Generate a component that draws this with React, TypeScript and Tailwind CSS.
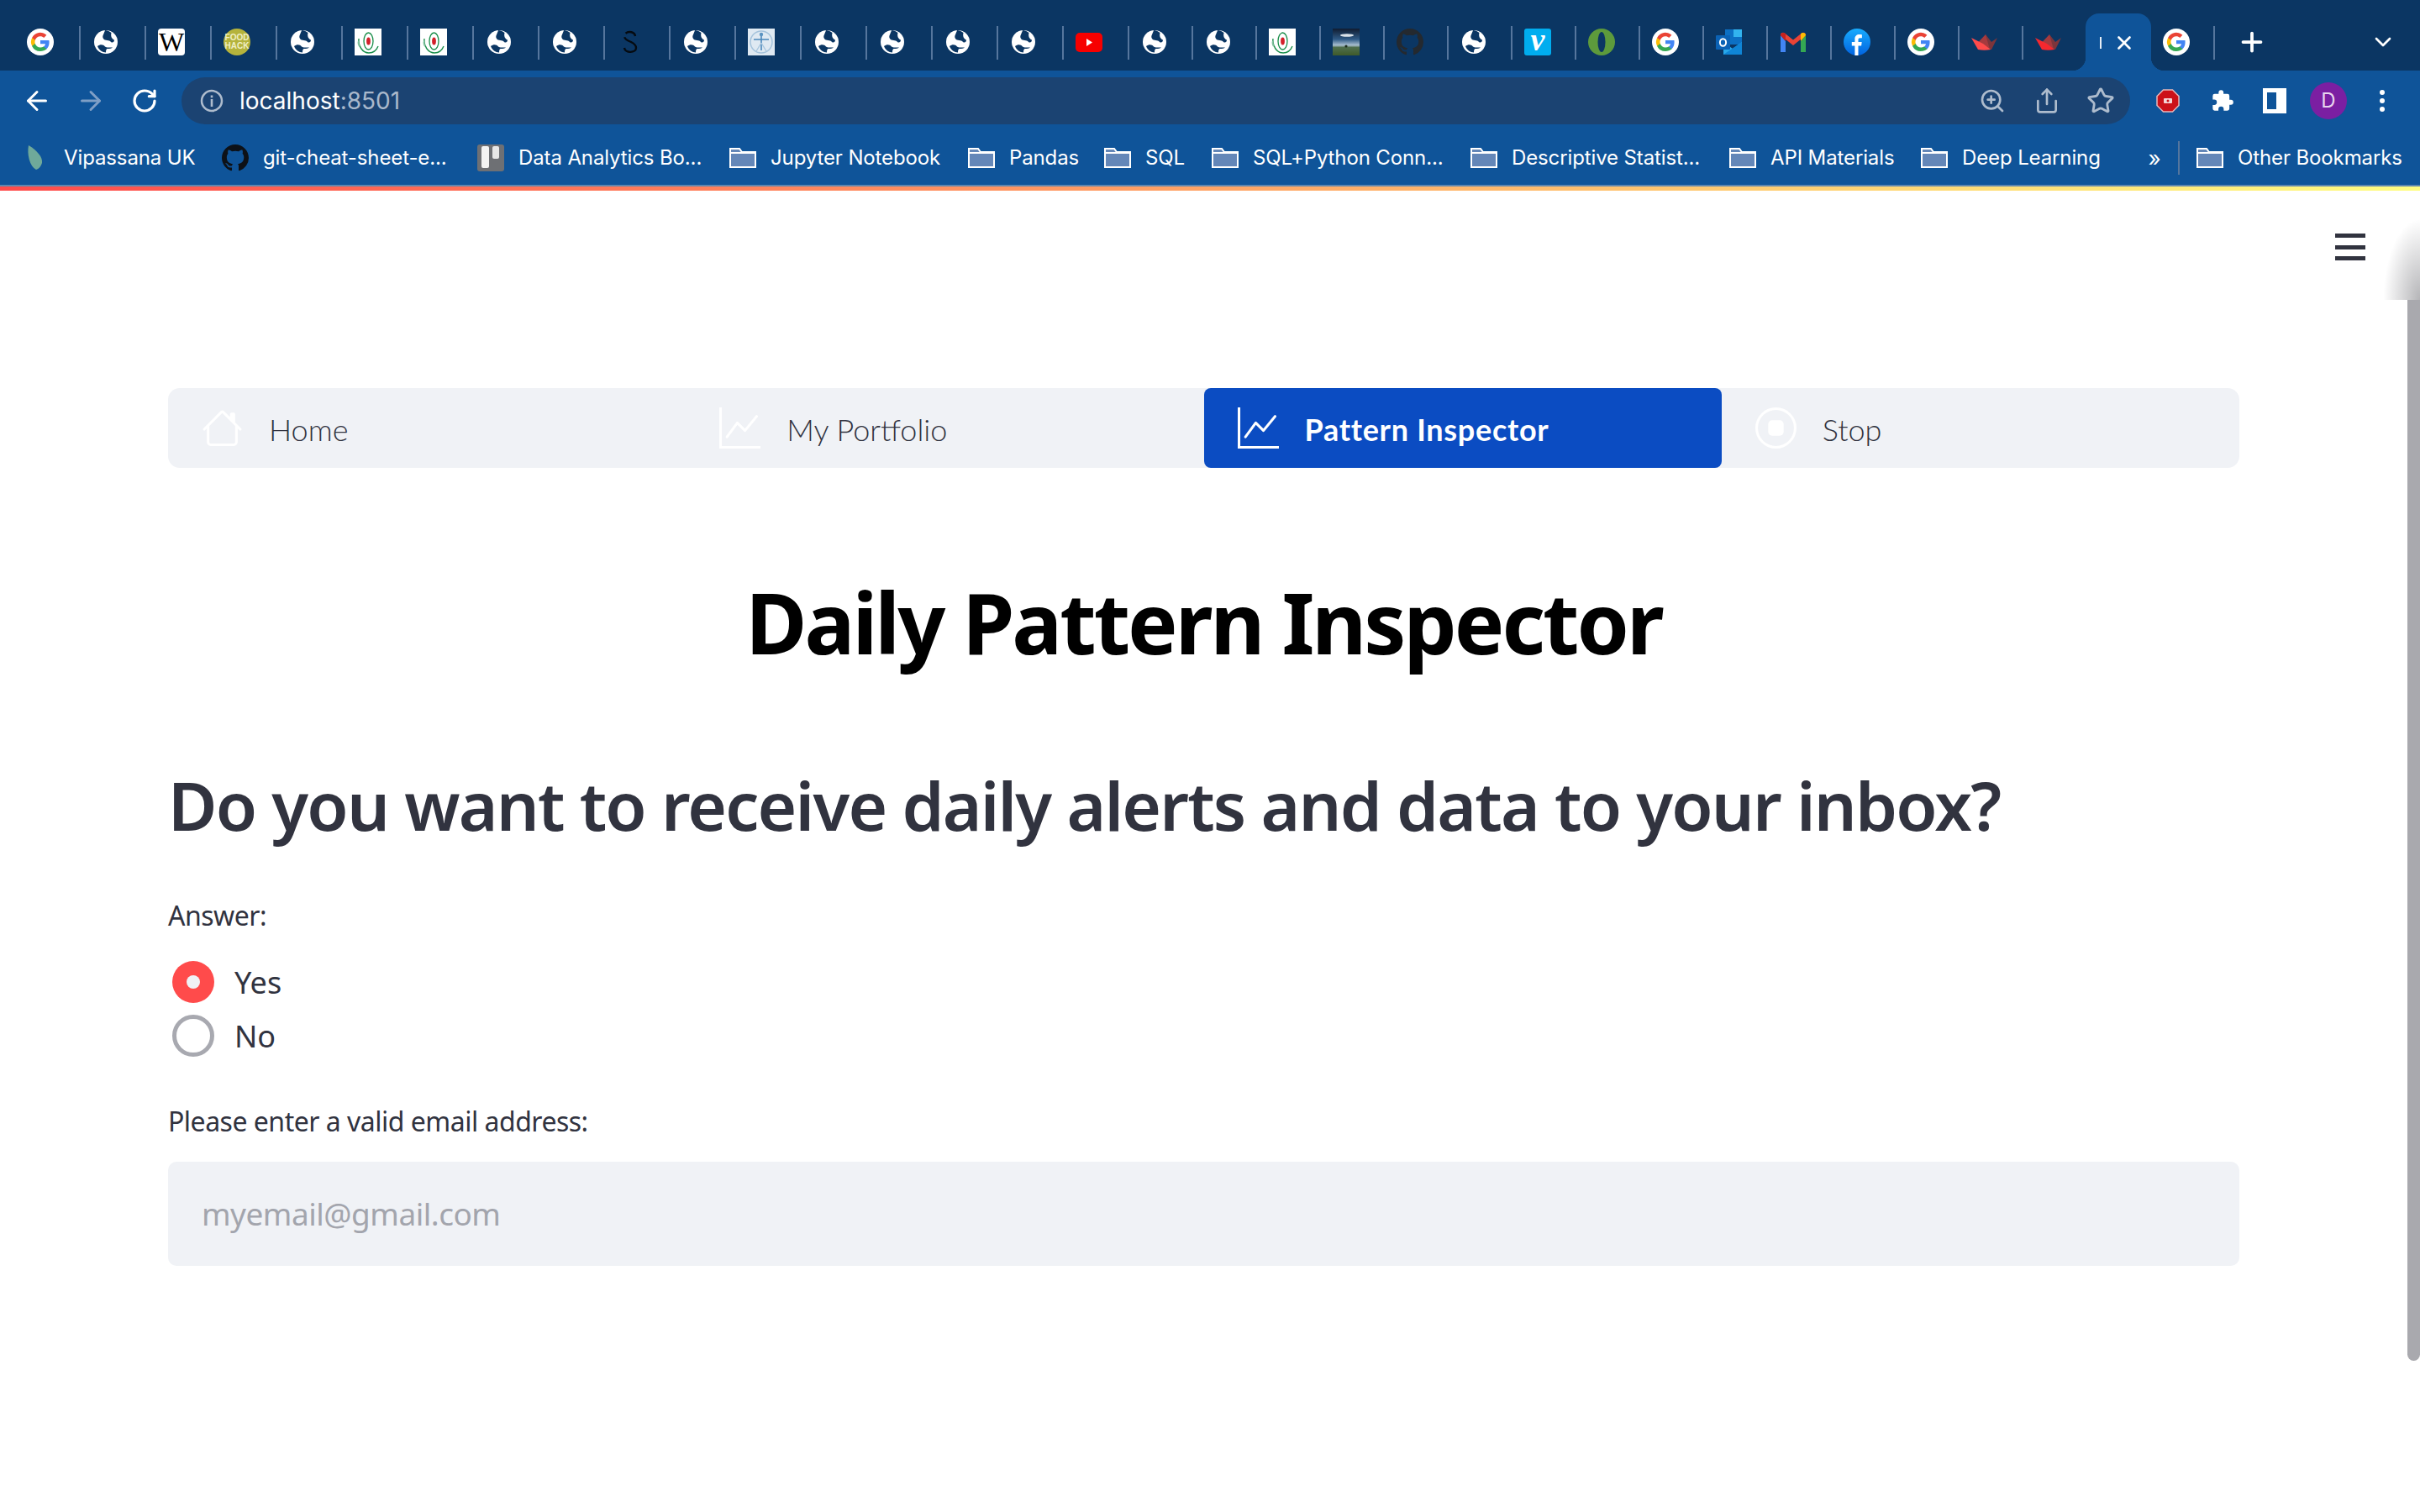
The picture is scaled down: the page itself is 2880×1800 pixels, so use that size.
import { BsGraphUp, BsHouse, BsStopCircle } from 'react-icons/bs'
import { ArrowLeft, ArrowRight, ChevronDown, Plus, RotateCw, Share, Star, X, ZoomIn } from 'lucide-react'
import type { ReactNode } from 'react'

const GoogleIcon = () => (
  <svg viewBox="0 0 32 32" className="h-8 w-8">
    <circle cx="16" cy="16" r="16" fill="#fff" />
    <path fill="#4285F4" d="M26.6 16.3c0-.8-.1-1.500-.2-2.200H16v4.200h6a5.100 5.100 0 0 1-2.200 3.400v2.800h3.600c2-1.900 3.200-4.700 3.200-8.200z" />
    <path fill="#34A853" d="M16 27c3 0 5.500-1 7.400-2.700l-3.600-2.800c-1 .7-2.300 1.100-3.800 1.100-2.900 0-5.300-2-6.200-4.600H6.100v2.900A11 11 0 0 0 16 27z" />
    <path fill="#FBBC05" d="M9.800 18a6.600 6.600 0 0 1 0-4.200v-2.900H6.100a11 11 0 0 0 0 9.900L9.800 18z" />
    <path fill="#EA4335" d="M16 9.300c1.600 0 3.100.6 4.200 1.700l3.200-3.200A11 11 0 0 0 6.100 10.900l3.700 2.900c.9-2.600 3.300-4.500 6.200-4.500z" />
  </svg>
)

const GlobeIcon = () => (
  <svg viewBox="0 0 32 32" className="h-8 w-8">
    <circle cx="16" cy="16" r="14" fill="#fff" />
    <path fill="#0b3663" d="M15 2c-1 4-4 7-2 10 2 3 7 1 9 4 2 1.500 4 0 4-2.500-3-1.500-4.500-4-3.500-8.500C20 3 17.500 2 15 2z" />
    <path fill="#0b3663" d="M6 21c3.500-2.500 7-2 9 .5 2.500 2 6 .5 9 1-1 1.500-4 1.500-6 1.500-1.500 0-2 2-2 4.500-4 0-8.500-3-10-7.500z" />
  </svg>
)

const SpiralIcon = () => (
  <svg viewBox="0 0 32 32" className="h-8 w-8">
    <rect width="32" height="32" fill="#fff" />
    <ellipse cx="16.500" cy="15" rx="5.500" ry="10" fill="none" stroke="#1c8f4c" strokeWidth="1.300" />
    <ellipse cx="16.500" cy="15" rx="2.400" ry="4.500" fill="#d3202a" />
    <path d="M5 12c-1 8 4 17 12 17 5 0 9-3 11-8" fill="none" stroke="#1c8f4c" strokeWidth="1.400" />
    <path d="M5 15c-1 2 0 5 1 6" fill="none" stroke="#7fbf9c" strokeWidth="2" />
  </svg>
)

const SIcon = () => (
  <svg viewBox="0 0 32 32" className="h-8 w-8">
    <path d="M22 9c-1-7-13-6-13 0 0 3 3 5 8 7 4 2 6 4 6 7 0 6-13 7-14 0" fill="none" stroke="#050a10" strokeWidth="2.400" strokeDasharray="14 5 40" />
  </svg>
)

const VitruvianIcon = () => (
  <svg viewBox="0 0 32 32" className="h-8 w-8">
    <rect width="32" height="32" fill="#dfe9f2" />
    <circle cx="16" cy="16" r="13" fill="none" stroke="#a5c3dc" strokeWidth="1.500" />
    <circle cx="16" cy="7" r="2.200" fill="#5b93c1" />
    <path d="M16 9v17M7 13h18" stroke="#4a87bb" strokeWidth="1.600" fill="none" />
    <path d="M16 17l-6 10M16 17l6 10" stroke="#a9c6de" strokeWidth="1.400" fill="none" />
  </svg>
)

const YoutubeIcon = () => (
  <svg viewBox="0 0 32 32" className="h-8 w-8">
    <rect x="0" y="5" width="32" height="23" rx="5" fill="#f70000" />
    <path d="M13 12l7 4.500-7 4.500z" fill="#fff" />
  </svg>
)

const LandscapeIcon = () => (
  <svg viewBox="0 0 32 32" className="h-8 w-8">
    <defs>
      <linearGradient id="sky" x1="0" y1="0" x2="0" y2="1">
        <stop offset="0" stopColor="#101c30" />
        <stop offset="0.4" stopColor="#2f5a86" />
        <stop offset="0.62" stopColor="#a9bfd0" />
        <stop offset="0.7" stopColor="#4f6f4d" />
        <stop offset="1" stopColor="#3f5a2a" />
      </linearGradient>
    </defs>
    <rect width="32" height="32" fill="url(#sky)" />
    <ellipse cx="17" cy="8" rx="8" ry="1.800" fill="#dbe3ea" />
    <circle cx="16" cy="21" r="1.600" fill="#1d2d1d" />
  </svg>
)

const GithubIcon = ({ fill }: { fill: string }) => (
  <svg viewBox="0 0 16 16" className="h-8 w-8" fill={fill}>
    <path d="M8 0C3.580 0 0 3.580 0 8c0 3.540 2.290 6.530 5.470 7.590.4.070.55-.17.55-.38 0-.19-.01-.82-.01-1.490-2.010.37-2.530-.49-2.690-.94-.09-.23-.48-.94-.82-1.130-.28-.15-.68-.52-.01-.53.63-.01 1.080.58 1.230.82.720 1.210 1.870.87 2.330.66.070-.52.280-.87.510-1.070-1.780-.2-3.640-.89-3.640-3.950 0-.87.310-1.590.820-2.150-.08-.2-.36-1.020.08-2.120 0 0 .67-.21 2.200.82.640-.18 1.320-.27 2-.27s1.360.09 2 .27c1.530-1.040 2.200-.82 2.200-.82.44 1.100.16 1.920.08 2.120.51.560.82 1.270.82 2.150 0 3.070-1.870 3.750-3.650 3.950.29.250.54.730.54 1.480 0 1.070-.01 1.930-.01 2.200 0 .21.150.46.550.38A8.010 8.010 0 0 0 16 8c0-4.420-3.580-8-8-8z" />
  </svg>
)

const VimeoIcon = () => (
  <div className="flex h-8 w-8 items-center justify-center rounded-[3px] bg-[#00adef] pb-[6px] font-['Liberation_Serif',serif] text-[38px] font-bold italic leading-none text-white">
    v
  </div>
)

const OperaGreenIcon = () => (
  <svg viewBox="0 0 32 32" className="h-8 w-8">
    <circle cx="16" cy="16" r="16" fill="#5d9a3c" />
    <ellipse cx="16" cy="16" rx="4.500" ry="12" fill="#0b3663" />
  </svg>
)

const OutlookIcon = () => (
  <svg viewBox="0 0 32 32" className="h-8 w-8">
    <rect x="11" y="1" width="20" height="18" fill="#0c70c4" />
    <rect x="21" y="1" width="10" height="9" fill="#32b4ef" />
    <path d="M9 16l11 8 11-8v15H9z" fill="#28a8ea" />
    <path d="M9 31l22-15v15z" fill="#0f85d6" />
    <rect x="0" y="8" width="17" height="17" rx="1" fill="#0b62b5" />
    <ellipse cx="8.500" cy="16.500" rx="3.600" ry="4.300" fill="none" stroke="#fff" strokeWidth="2" />
  </svg>
)

const GmailIcon = () => (
  <svg viewBox="0 0 32 32" className="h-8 w-8">
    <path d="M1 8v20h6V15z" fill="#4285f4" />
    <path d="M25 15v13h6V8z" fill="#34a853" />
    <path d="M1 8c0-3 3-4 5-2.500l10 8 10-8C28 4 31 5 31 8l-15 12z" fill="#ea4335" />
    <path d="M25 6.300c1.500-2 6-2 6 1.700l-6 7z" fill="#fbbc04" />
    <path d="M7 6.300C5.500 4.300 1 4.300 1 8l6 7z" fill="#c5221f" />
  </svg>
)

const FacebookIcon = () => (
  <svg viewBox="0 0 32 32" className="h-8 w-8">
    <defs>
      <linearGradient id="fb" x1="0" y1="0" x2="0" y2="1">
        <stop offset="0" stopColor="#18acfe" />
        <stop offset="1" stopColor="#0163e0" />
      </linearGradient>
    </defs>
    <circle cx="16" cy="16" r="16" fill="url(#fb)" />
    <path d="M13.400 32V20.500H9.800V16h3.600v-3.400c0-3.600 2.100-5.500 5.300-5.500 1.500 0 2.800.1 3.200.2v3.900h-2.200c-1.800 0-2.200.8-2.200 2.100V16h4.200l-.6 4.500h-3.600V32z" fill="#fff" />
  </svg>
)

const CrownIcon = ({ bright }: { bright?: boolean }) => (
  <svg viewBox="0 0 32 32" className="h-8 w-8">
    <path d="M17 7l7 9 7-5-7 14H14z" fill="#7d353b" />
    <path d="M8.500 16L17 7l5 18H10z" fill="#a63a3e" />
    <path d="M0 11l14 7 9 7c-5 1-10 1-15 0z" fill={bright ? '#f5282f' : '#ff4b4b'} />
  </svg>
)

const TabIconWiki = () => (
  <div className="flex h-8 w-8 items-center justify-center rounded-[4px] bg-white font-['Liberation_Serif',serif] text-[32px] leading-none text-black">
    W
  </div>
)

const TabIconFood = () => (
  <div className="flex h-8 w-8 flex-col items-center justify-center rounded-full bg-[#b5b33c] font-['Liberation_Sans',sans-serif] text-[10px] font-bold leading-[10px] text-[#f0efc6]">
    <span>FOOD</span>
    <span>HACK</span>
  </div>
)

const tabs: { icon: ReactNode; w: number }[] = [
  { icon: <GoogleIcon />, w: 78 },
  { icon: <GlobeIcon />, w: 78 },
  { icon: <TabIconWiki />, w: 78 },
  { icon: <TabIconFood />, w: 78 },
  { icon: <GlobeIcon />, w: 78 },
  { icon: <SpiralIcon />, w: 78 },
  { icon: <SpiralIcon />, w: 78 },
  { icon: <GlobeIcon />, w: 78 },
  { icon: <GlobeIcon />, w: 78 },
  { icon: <SIcon />, w: 78 },
  { icon: <GlobeIcon />, w: 78 },
  { icon: <VitruvianIcon />, w: 78 },
  { icon: <GlobeIcon />, w: 78 },
  { icon: <GlobeIcon />, w: 78 },
  { icon: <GlobeIcon />, w: 78 },
  { icon: <GlobeIcon />, w: 78 },
  { icon: <YoutubeIcon />, w: 78 },
  { icon: <GlobeIcon />, w: 76 },
  { icon: <GlobeIcon />, w: 76 },
  { icon: <SpiralIcon />, w: 76 },
  { icon: <LandscapeIcon />, w: 76 },
  { icon: <GithubIcon fill="#24292f" />, w: 76 },
  { icon: <GlobeIcon />, w: 76 },
  { icon: <VimeoIcon />, w: 76 },
  { icon: <OperaGreenIcon />, w: 76 },
  { icon: <GoogleIcon />, w: 76 },
  { icon: <OutlookIcon />, w: 76 },
  { icon: <GmailIcon />, w: 76 },
  { icon: <FacebookIcon />, w: 76 },
  { icon: <GoogleIcon />, w: 76 },
  { icon: <CrownIcon />, w: 76 },
]

const FolderIcon = () => (
  <svg viewBox="0 0 32 24" className="h-6 w-8">
    <path d="M1 23V1h11l3 4h16v18z" fill="#6487b8" stroke="#fff" strokeWidth="2" />
    <path d="M1 6h30" stroke="#fff" strokeWidth="2" />
  </svg>
)

const LeafIcon = () => (
  <svg viewBox="0 0 32 32" className="h-8 w-8">
    <path d="M7 1c10 6 17 14 16 21-1 4-4 7-7 8C8 26 5 11 7 1z" fill="#6fa99a" />
  </svg>
)

const BookIcon = () => (
  <svg viewBox="0 0 32 32" className="h-8 w-8">
    <rect width="32" height="32" rx="3" fill="#6e7074" />
    <rect x="5" y="2" width="9" height="26" rx="2" fill="#f3f3f3" />
    <rect x="18" y="2" width="8" height="15" rx="2" fill="#e7e7e7" />
  </svg>
)

const bookmarks: { icon: ReactNode; label: string; w: number }[] = [
  { icon: <LeafIcon />, label: 'Vipassana UK', w: 237 },
  { icon: <GithubIcon fill="#0d1117" />, label: 'git-cheat-sheet-e...', w: 304 },
  { icon: <BookIcon />, label: 'Data Analytics Bo...', w: 300 },
  { icon: <FolderIcon />, label: 'Jupyter Notebook', w: 284 },
  { icon: <FolderIcon />, label: 'Pandas', w: 162 },
  { icon: <FolderIcon />, label: 'SQL', w: 128 },
  { icon: <FolderIcon />, label: 'SQL+Python Conn...', w: 308 },
  { icon: <FolderIcon />, label: 'Descriptive Statist...', w: 308 },
  { icon: <FolderIcon />, label: 'API Materials', w: 228 },
  { icon: <FolderIcon />, label: 'Deep Learning', w: 264 },
]

const BookmarkItem = ({ icon, label, w }: { icon: ReactNode; label: string; w?: number }) => (
  <div className="flex shrink-0 items-center gap-[17px]" style={w ? { width: w } : undefined}>
    <div className="flex h-8 w-8 items-center justify-center">{icon}</div>
    <span className="whitespace-nowrap text-[24px] tracking-[-0.12px] text-white">{label}</span>
  </div>
)

const navItems = [
  { label: 'Home', icon: <BsHouse className="h-[49px] w-[49px]" /> },
  { label: 'My Portfolio', icon: <BsGraphUp className="h-[49px] w-[49px]" /> },
  { label: 'Pattern Inspector', icon: <BsGraphUp className="h-[49px] w-[49px]" />, active: true },
  { label: 'Stop', icon: <BsStopCircle className="h-[49px] w-[49px]" /> },
]

const BrowserChrome = () => (
  <div className="font-['Inter',sans-serif]">
    <div className="flex h-[84px] bg-[#0b3663] pl-[18px]">
      {tabs.map((tab, i) => (
        <div key={i} className="mt-[31px] flex h-[40px] shrink-0 items-start border-r-2 border-[#56769d] pl-[14px] pt-[3px]" style={{ width: tab.w }}>
          {tab.icon}
        </div>
      ))}
      <div className="mt-[34px] w-[74px] shrink-0 pl-[14px]">
        <CrownIcon bright />
      </div>
      <div className="relative mt-[16px] flex h-[68px] w-[78px] shrink-0 items-start rounded-t-[16px] bg-[#0f5499] pl-[17px] pt-[18px] text-white">
        <div className="absolute bottom-0 left-[-16px] h-4 w-4 bg-[radial-gradient(circle_at_0_0,transparent_16px,#0f5499_16.5px)]" />
        <div className="absolute bottom-0 right-[-16px] h-4 w-4 bg-[radial-gradient(circle_at_100%_0,transparent_16px,#0f5499_16.5px)]" />
        <span className="mt-[10px] h-[14px] w-[2px] bg-[#e6edf5]" />
        <X className="ml-[14px] mt-[4px] h-[26px] w-[26px]" strokeWidth={2.5} />
      </div>
      <div className="mt-[31px] flex h-[40px] w-[76px] shrink-0 items-start border-r-2 border-[#56769d] pl-[14px] pt-[3px]">
        <GoogleIcon />
      </div>
      <Plus className="ml-[26px] mt-[32px] h-9 w-9 text-white" strokeWidth={2.5} />
      <ChevronDown className="ml-[122px] mt-[34px] h-8 w-8 text-white" strokeWidth={2} />
    </div>
    <div className="h-[70px] bg-[#0f5499]">
      <div className="flex items-center pl-[12px] pt-[8px]">
        <div className="flex h-14 w-16 items-center justify-center">
          <ArrowLeft className="h-9 w-9 text-white" strokeWidth={2} />
        </div>
        <div className="flex h-14 w-16 items-center justify-center">
          <ArrowRight className="h-9 w-9 text-[#7f9fc6]" strokeWidth={2} />
        </div>
        <div className="flex h-14 w-16 items-center justify-center">
          <RotateCw className="h-8 w-8 text-white" strokeWidth={2.4} />
        </div>
        <div className="ml-[12px] flex h-14 w-[2319px] items-center rounded-full bg-[#1b4372] pl-[22px] pr-[18px]">
          <svg viewBox="0 0 28 28" className="h-7 w-7 text-[#aebccd]">
            <circle cx="14" cy="14" r="12" fill="none" stroke="currentColor" strokeWidth="2.500" />
            <rect x="12.700" y="12" width="2.600" height="9" fill="currentColor" />
            <rect x="12.700" y="7.500" width="2.600" height="2.800" fill="currentColor" />
          </svg>
          <span className="ml-[19px] text-[28px] text-white">
            localhost<span className="text-[#a9b8cb]">:8501</span>
          </span>
          <div className="flex-1" />
          <ZoomIn className="h-8 w-8 text-[#aebccd]" strokeWidth={2} />
          <Share className="ml-[33px] h-8 w-8 text-[#aebccd]" strokeWidth={2} />
          <Star className="ml-[31px] h-[34px] w-[34px] text-[#aebccd]" strokeWidth={2} />
        </div>
        <svg viewBox="0 0 28 28" className="ml-[31px] h-7 w-7">
          <path d="M8.500 1h11L27 8.500v11L19.500 27h-11L1 19.500v-11z" fill="#cc1119" stroke="#e8b9bb" strokeWidth="1.500" />
          <rect x="9" y="11" width="10" height="6" rx="1" fill="#f4d6d7" />
          <circle cx="14" cy="14" r="1.500" fill="#cc1119" />
        </svg>
        <svg viewBox="0 0 24 24" className="ml-[37px] h-7 w-7" fill="#fff">
          <path d="M20.500 11H19V7a2 2 0 0 0-2-2h-4V3.500a2.500 2.500 0 0 0-5 0V5H4a2 2 0 0 0-2 2v3.800h1.500a2.700 2.700 0 0 1 0 5.400H2V20a2 2 0 0 0 2 2h3.800v-1.500a2.700 2.700 0 0 1 5.400 0V22H17a2 2 0 0 0 2-2v-4h1.500a2.500 2.500 0 0 0 0-5z" />
        </svg>
        <div className="ml-[34px] flex h-[30px] w-[28px] border-[5px] border-r-[12px] border-white" />
        <div className="ml-[28px] flex h-11 w-11 items-center justify-center rounded-full bg-[#7b1fa2] text-[24px] text-[#e8d5ef]">D</div>
        <div className="ml-[39px] flex flex-col gap-[4px]">
          <span className="h-[6px] w-[6px] rounded-full bg-white" />
          <span className="h-[6px] w-[6px] rounded-full bg-white" />
          <span className="h-[6px] w-[6px] rounded-full bg-white" />
        </div>
      </div>
    </div>
    <div className="flex h-[66px] items-center bg-[#0f5499] pl-[27px] pt-[2px]">
      {bookmarks.map((b) => (
        <BookmarkItem key={b.label} {...b} />
      ))}
      <span className="w-[28px] text-center text-[26px] text-white">»</span>
      <span className="ml-[14px] h-[40px] w-[2px] bg-[#56769d]" />
      <div className="ml-[20px]">
        <BookmarkItem icon={<FolderIcon />} label="Other Bookmarks" />
      </div>
    </div>
    <div className="h-[2px] bg-[#5f86ae]" />
    <div className="h-[5px] bg-[linear-gradient(90deg,#ff4b4b,#fffd80)]" />
  </div>
)

const Radio = ({ label, checked }: { label: string; checked?: boolean }) => (
  <div className="flex h-[50px] items-center gap-[24px] pl-[5px]">
    {checked ? (
      <div className="flex h-[50px] w-[50px] items-center justify-center rounded-full bg-[#ff4b4b]">
        <div className="h-4 w-4 rounded-full bg-[#f0f2f6]" />
      </div>
    ) : (
      <div className="h-[50px] w-[50px] rounded-full border-[5px] border-[#a8a9b0]" />
    )}
    <span className="mt-[2px] text-[36px] text-[#31333f]">{label}</span>
  </div>
)

const App = () => {
  return (
    <div className="relative h-[1800px] w-[2880px] overflow-hidden bg-white font-['Noto_Sans',sans-serif]">
      <BrowserChrome />
      <div className="flex justify-end pr-[65px] pt-[51px]">
        <div className="flex w-[36px] flex-col gap-[8.500px]">
          <span className="h-[5px] bg-[#31333f]" />
          <span className="h-[5px] bg-[#31333f]" />
          <span className="h-[5px] bg-[#31333f]" />
        </div>
      </div>
      <div className="ml-[200px] w-[2465px]">
        <nav className="mt-[152px] grid h-[95px] grid-cols-4 rounded-[14px] bg-[#f0f2f6] font-['Lato',sans-serif] text-[36px] text-[#31333f]">
          {navItems.map((item) => (
            <div
              key={item.label}
              className={item.active ? 'flex items-center gap-[31px] rounded-[8px] bg-[#0b4cc2] pl-[40px] text-white' : 'flex items-center gap-[31px] pl-[40px]'}
            >
              <span className="text-white">{item.icon}</span>
              <span className={item.active ? 'mt-[3px] font-bold tracking-[0.7px]' : 'mt-[3px] font-light'}>{item.label}</span>
            </div>
          ))}
        </nav>
        <h1 className="mt-[103px] flex h-[160px] items-center justify-center text-[100px] font-bold tracking-[-3px] text-black">
          Daily Pattern Inspector
        </h1>
        <h2 className="mt-[58px] flex h-[160px] items-center text-[80px] font-semibold tracking-[-1.8px] text-[#31333f]">
          Do you want to receive daily alerts and data to your inbox?
        </h2>
        <div className="mt-[32px] flex h-[40px] items-center text-[32px] tracking-[-0.5px] text-[#31333f]">Answer:</div>
        <div className="mt-[34px]">
          <Radio label="Yes" checked />
        </div>
        <div className="mt-[14px]">
          <Radio label="No" />
        </div>
        <div className="mt-[57px] flex h-[40px] items-center text-[32px] tracking-[-0.5px] text-[#31333f]">Please enter a valid email address:</div>
        <div className="mt-[28px] flex h-[124px] items-center rounded-[10px] bg-[#f0f2f6] pl-[40px] text-[37px] tracking-[-0.5px] text-[#a3a5ad]">
          myemail@gmail.com
        </div>
      </div>
      <div className="absolute right-0 top-[260px] h-[97px] w-[44px] bg-[radial-gradient(ellipse_at_100%_100%,rgba(120,120,125,0.55),transparent_70%)]" />
      <div className="absolute right-0 top-[357px] h-[1263px] w-[15px] rounded-b-full bg-[#a9a9ae]" />
    </div>
  )
}

export default App
